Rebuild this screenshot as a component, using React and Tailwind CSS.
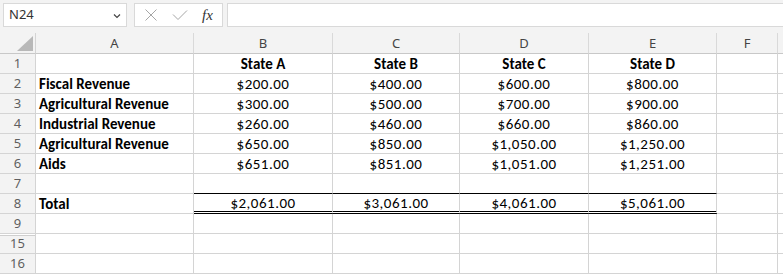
import React from "react";

const GRID = "grid grid-cols-[36px_158px_139px_127px_129px_128px_61px_1fr]";
const CELLFONT = { fontFamily: "Carlito, Lato, 'Liberation Sans', sans-serif" };
const UIFONT = { fontFamily: "'Noto Sans', 'Open Sans', 'Liberation Sans', sans-serif" };

const rows = [
  { n: 1, label: "", vals: ["State A", "State B", "State C", "State D"], head: true },
  { n: 2, label: "Fiscal Revenue", vals: ["$200.00", "$400.00", "$600.00", "$800.00"] },
  { n: 3, label: "Agricultural Revenue", vals: ["$300.00", "$500.00", "$700.00", "$900.00"] },
  { n: 4, label: "Industrial Revenue", vals: ["$260.00", "$460.00", "$660.00", "$860.00"] },
  { n: 5, label: "Agricultural Revenue", vals: ["$650.00", "$850.00", "$1,050.00", "$1,250.00"] },
  { n: 6, label: "Aids", vals: ["$651.00", "$851.00", "$1,051.00", "$1,251.00"] },
  { n: 7, label: "", vals: ["", "", "", ""], topOfTotal: true },
  { n: 8, label: "Total", vals: ["$2,061.00", "$3,061.00", "$4,061.00", "$5,061.00"], total: true },
  { n: 9, label: "", vals: ["", "", "", ""] },
  { n: 15, label: "", vals: ["", "", "", ""], afterHidden: true },
  { n: 16, label: "", vals: ["", "", "", ""] },
];

function Row({ r }) {
  return (
    <div className={GRID}>
      <div
        className={
          "h-5 box-border border-r border-b border-[#d4d4d4] bg-[#f3f3f3] flex items-center justify-center text-[13px] text-[#5f5f5f] " +
          (r.afterHidden ? "shadow-[inset_0_1px_0_#ffffff,inset_0_2px_0_#cfcfcf]" : "")
        }
        style={UIFONT}
      >
        {r.n}
      </div>
      <div
        className="h-5 box-border border-r border-b border-[#d4d4d4] flex items-center pl-[3px] pt-[1px] text-[15px] font-bold text-black"
        style={CELLFONT}
      >
        {r.label}
      </div>
      {r.vals.map((v, i) => (
        <div
          key={i}
          className={
            "h-5 box-border border-r flex items-center justify-center pt-[1px] text-[15px] text-black " +
            (r.head ? "font-bold " : "tracking-[0.5px] ") +
            (r.topOfTotal
              ? "border-b border-b-black border-r-[#d4d4d4] "
              : r.total
              ? "border-b-[3px] border-double border-b-black border-r-[#d4d4d4] "
              : "border-b border-[#d4d4d4] ")
          }
          style={CELLFONT}
        >
          {v}
        </div>
      ))}
      <div className="h-5 box-border border-r border-b border-[#d4d4d4]" />
      <div className="h-5 box-border border-b border-[#d4d4d4]" />
    </div>
  );
}

export default function App() {
  return (
    <div className="w-[783px] h-[275px] overflow-hidden bg-white">
      {/* Formula bar */}
      <div className="flex h-[33px] bg-[#f3f3f3] pt-[3px] pl-[3px] pb-[6px] box-border">
        <div
          className="w-[124px] h-[24px] box-border bg-white border border-[#d9d9d9] flex items-center justify-between pl-[5px] pr-[5px] text-[13px] text-[#333]"
          style={UIFONT}
        >
          <span>N24</span>
          <svg width="8" height="6" viewBox="0 0 8 6" className="mt-[1px]">
            <path d="M1 1.5 L4 4.5 L7 1.5" fill="none" stroke="#444" strokeWidth="1.2" />
          </svg>
        </div>
        <div className="ml-[7px] w-[89px] h-[24px] box-border bg-white border border-[#d9d9d9] flex items-center">
          <svg width="14" height="14" viewBox="0 0 14 14" className="ml-[9px]">
            <path d="M1.5 1.5 L12.5 12.5 M12.5 1.5 L1.5 12.5" fill="none" stroke="#a6a6a6" strokeWidth="1" />
          </svg>
          <svg width="16" height="12" viewBox="0 0 16 12" className="ml-[14px]">
            <path d="M1 5.5 L6 10.5 L15 1.5" fill="none" stroke="#a6a6a6" strokeWidth="1" />
          </svg>
          <span
            className="ml-[14px] italic text-[15px] text-[#333] leading-none"
            style={{ fontFamily: "'Liberation Serif', 'DejaVu Serif', serif" }}
          >
            fx
          </span>
        </div>
        <div className="ml-[4px] flex-1 h-[24px] box-border bg-white border border-[#d9d9d9] border-r-0" />
      </div>

      {/* Column header */}
      <div className={GRID + " bg-[#f3f3f3]"}>
        <div className="h-[21px] box-border border-r border-b border-[#c8c8c8] border-r-[#d4d4d4] relative">
          <svg width="16" height="15" viewBox="0 0 16 15" className="absolute right-[2px] bottom-[2px]">
            <path d="M16 0 L16 15 L0 15 Z" fill="#b8b8b8" />
          </svg>
        </div>
        {["A", "B", "C", "D", "E", "F", ""].map((c, i) => (
          <div
            key={i}
            className={
              "h-[21px] box-border border-b border-[#c8c8c8] flex items-center justify-center text-[13px] text-[#444] pt-[1px] " +
              (i < 6 ? "border-r border-r-[#d9d9d9]" : "")
            }
            style={UIFONT}
          >
            {c}
          </div>
        ))}
      </div>

      {rows.map((r) => (
        <Row key={r.n} r={r} />
      ))}
    </div>
  );
}
